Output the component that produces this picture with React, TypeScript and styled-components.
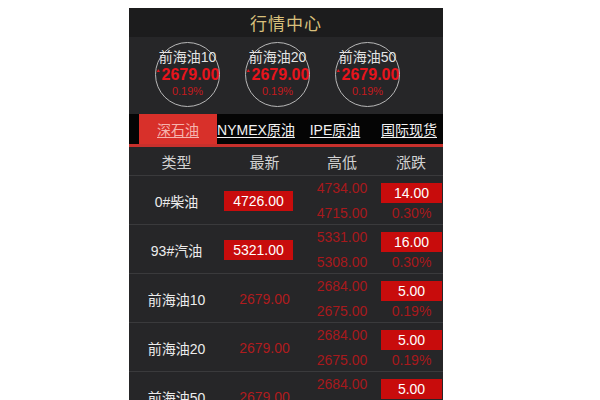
import React from 'react';
import styled, { createGlobalStyle } from 'styled-components';

const GlobalStyle = createGlobalStyle`
  html, body {
    margin: 0;
    padding: 0;
    background: #ffffff;
  }
  body {
    font-family: "Liberation Sans", "Noto Sans CJK SC", sans-serif;
  }
`;

const Page = styled.div`
  width: 600px;
  height: 400px;
  overflow: hidden;
  padding: 8px 0 0 129px;
  box-sizing: border-box;
`;

const Panel = styled.div`
  width: 314px;
  height: 392px;
  background: #262628;
  overflow: hidden;
`;

const TitleBar = styled.div`
  height: 29px;
  background: #1c1c1d;
  display: flex;
  align-items: center;
  justify-content: center;
  color: #d8c07c;
  font-size: 17px;
  letter-spacing: 1px;
`;

const CircleStrip = styled.div`
  height: 77px;
  display: flex;
  gap: 25px;
  padding: 5px 0 0 26px;
  box-sizing: border-box;
`;

const Quote = styled.div`
  width: 65px;
  height: 65px;
  border-radius: 50%;
  border: 1.5px solid #b8b8b8;
  box-sizing: border-box;
  display: flex;
  flex-direction: column;
  align-items: center;
  justify-content: center;
  white-space: nowrap;
`;

const QuoteName = styled.div`
  color: #e4e4e4;
  font-size: 14px;
  line-height: 17px;
`;

const QuotePrice = styled.div`
  color: #e8141c;
  font-size: 16px;
  font-weight: bold;
  line-height: 17px;
  display: flex;
  align-items: flex-start;
`;

const UpMark = styled.span`
  font-size: 5px;
  line-height: 8px;
  margin-right: 1px;
`;

const QuotePct = styled.div`
  color: #c41a1e;
  font-size: 11px;
  line-height: 17px;
`;

const TabBar = styled.div`
  height: 30px;
  background: #050505;
  display: flex;
  padding-left: 10px;
  border-bottom: 3px solid #c8302c;
`;

const Tab = styled.div<{ $width: number; $active?: boolean }>`
  width: ${(p) => p.$width}px;
  display: flex;
  align-items: center;
  justify-content: center;
  font-size: 14px;
  white-space: nowrap;
  text-decoration: underline;
  text-underline-offset: 2px;
  background: ${(p) => (p.$active ? '#d8302a' : 'transparent')};
  color: ${(p) => (p.$active ? '#f6b4ae' : '#f2f2f2')};
`;

const Grid = styled.div`
  display: grid;
  grid-template-columns: 95px 81px 74px 64px;
`;

const HeadRow = styled(Grid)`
  height: 28px;
  border-bottom: 1px solid #3a3a3c;
  color: #d2d2d2;
  font-size: 15px;
`;

const HeadCell = styled.div`
  display: flex;
  align-items: center;
  justify-content: center;
`;

const Row = styled(Grid)`
  height: 48px;
  border-bottom: 1px solid #3a3a3c;
  font-size: 14px;
`;

const NameCell = styled.div`
  display: flex;
  align-items: center;
  justify-content: center;
  color: #ececec;
`;

const LatestCell = styled.div<{ $boxed: boolean }>`
  display: flex;
  align-items: center;
  justify-content: ${(p) => (p.$boxed ? 'flex-start' : 'center')};
`;

const PriceBox = styled.div`
  width: 69px;
  height: 20px;
  background: #c80c0c;
  color: #ffffff;
  display: flex;
  align-items: center;
  justify-content: center;
`;

const DimPrice = styled.span`
  color: #b01c1e;
`;

const RangeCell = styled.div`
  display: flex;
  flex-direction: column;
  justify-content: center;
  align-items: center;
  color: #a8191c;
  line-height: 25px;
`;

const ChangeCell = styled.div`
  display: flex;
  flex-direction: column;
  align-items: flex-end;
  padding: 7px 1px 0 0;
`;

const ChangeBox = styled.div`
  width: 61px;
  height: 20px;
  background: #c80c0c;
  color: #ffffff;
  display: flex;
  align-items: center;
  justify-content: center;
`;

const ChangePct = styled.div`
  width: 61px;
  text-align: center;
  line-height: 20px;
  color: #a8191c;
`;

const quotes = [
  { name: '前海油10', price: '2679.00', pct: '0.19%' },
  { name: '前海油20', price: '2679.00', pct: '0.19%' },
  { name: '前海油50', price: '2679.00', pct: '0.19%' },
];

const tabs = [
  { label: '深石油', width: 78, active: true },
  { label: 'NYMEX原油', width: 78 },
  { label: 'IPE原油', width: 80 },
  { label: '国际现货', width: 68 },
];

const rows = [
  { name: '0#柴油', latest: '4726.00', boxed: true, high: '4734.00', low: '4715.00', change: '14.00', pct: '0.30%' },
  { name: '93#汽油', latest: '5321.00', boxed: true, high: '5331.00', low: '5308.00', change: '16.00', pct: '0.30%' },
  { name: '前海油10', latest: '2679.00', boxed: false, high: '2684.00', low: '2675.00', change: '5.00', pct: '0.19%' },
  { name: '前海油20', latest: '2679.00', boxed: false, high: '2684.00', low: '2675.00', change: '5.00', pct: '0.19%' },
  { name: '前海油50', latest: '2679.00', boxed: false, high: '2684.00', low: '2675.00', change: '5.00', pct: '0.19%' },
];

export default function App() {
  return (
    <>
      <GlobalStyle />
      <Page>
        <Panel>
          <TitleBar>行情中心</TitleBar>
          <CircleStrip>
            {quotes.map((q) => (
              <Quote key={q.name}>
                <QuoteName>{q.name}</QuoteName>
                <QuotePrice>
                  <UpMark>▲</UpMark>
                  {q.price}
                </QuotePrice>
                <QuotePct>{q.pct}</QuotePct>
              </Quote>
            ))}
          </CircleStrip>
          <TabBar>
            {tabs.map((t) => (
              <Tab key={t.label} $width={t.width} $active={t.active}>
                {t.label}
              </Tab>
            ))}
          </TabBar>
          <HeadRow>
            <HeadCell>类型</HeadCell>
            <HeadCell>最新</HeadCell>
            <HeadCell>高低</HeadCell>
            <HeadCell>涨跌</HeadCell>
          </HeadRow>
          {rows.map((r) => (
            <Row key={r.name}>
              <NameCell>{r.name}</NameCell>
              <LatestCell $boxed={r.boxed}>
                {r.boxed ? <PriceBox>{r.latest}</PriceBox> : <DimPrice>{r.latest}</DimPrice>}
              </LatestCell>
              <RangeCell>
                <div>{r.high}</div>
                <div>{r.low}</div>
              </RangeCell>
              <ChangeCell>
                <ChangeBox>{r.change}</ChangeBox>
                <ChangePct>{r.pct}</ChangePct>
              </ChangeCell>
            </Row>
          ))}
        </Panel>
      </Page>
    </>
  );
}
